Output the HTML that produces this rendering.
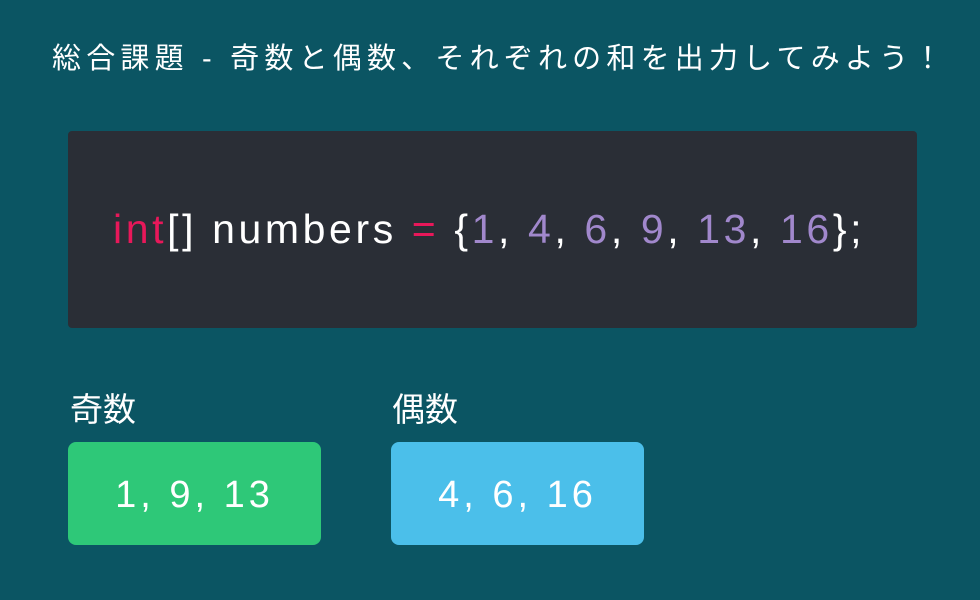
<!DOCTYPE html>
<html><head><meta charset="utf-8"><style>
body{margin:0;width:980px;height:600px;background:#0b5563;position:relative;overflow:hidden;font-family:"Liberation Sans","Noto Sans CJK JP",sans-serif;color:#fff}
.t{position:absolute;left:52px;top:35px;font-size:29px;letter-spacing:5.2px;white-space:nowrap}
.code{position:absolute;left:68px;top:131px;width:849px;height:197px;background:#2a2e36;border-radius:4px}
.c{position:absolute;left:113px;top:206px;font-size:41px;white-space:nowrap;letter-spacing:3.6px;color:#fff;font-weight:300}
.r{color:#e8185a}.p{color:#a188cc}
.l{position:absolute;top:383px;font-size:33px}
.b{position:absolute;top:442px;width:253px;height:103px;border-radius:8px;font-size:38px;text-align:center;line-height:106px;letter-spacing:4px}
</style></head><body>
<div class="t">総合課題 - 奇数と偶数、それぞれの和を出力してみよう！</div>
<div class="code"></div>
<div class="c"><span class="r">int</span>[] numbers <span class="r">=</span> {<span class="p">1</span>, <span class="p">4</span>, <span class="p">6</span>, <span class="p">9</span>, <span class="p">13</span>, <span class="p">16</span>};</div>
<div class="l" style="left:70px">奇数</div>
<div class="l" style="left:392px">偶数</div>
<div class="b" style="left:68px;background:#2ec878">1, 9, 13</div>
<div class="b" style="left:391px;background:#4bbfea">4, 6, 16</div>
</body></html>
